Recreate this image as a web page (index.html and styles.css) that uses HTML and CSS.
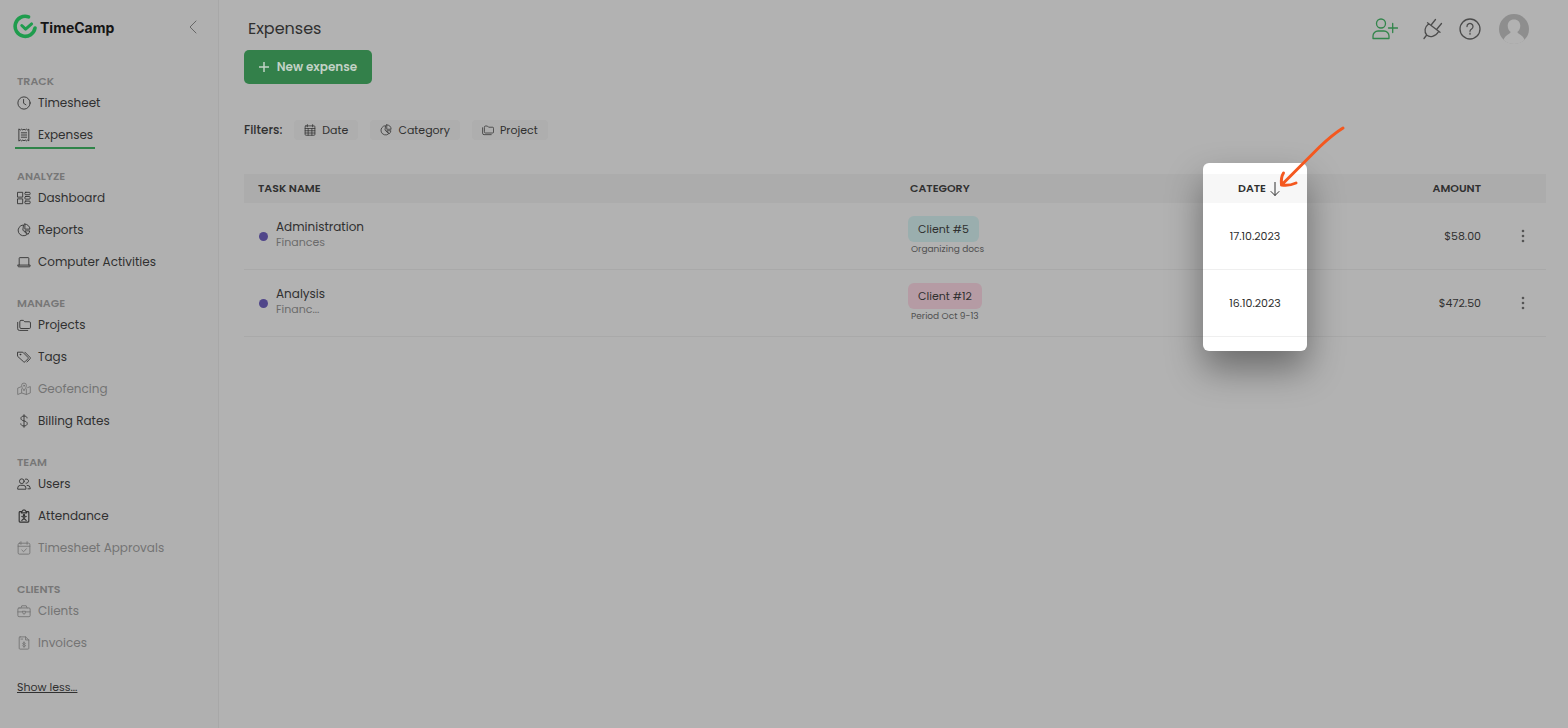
FILE: index.html
```html
<!DOCTYPE html>
<html lang="en">
<head>
  <meta charset="UTF-8" />
  <meta name="viewport" content="width=device-width, initial-scale=1.0"/>
  <title>TimeCamp - Expenses</title>
  <link rel="stylesheet" href="styles.css">
</head>
<body>

  <!-- shared icons -->
  <svg class="sprite" aria-hidden="true">
    <symbol id="i-pie" viewBox="0 0 16 16"><path d="M7 2.2A6.2 6.2 0 1 0 11.6 13L7 8.4zM9 1.2V7h5.8A6 6 0 0 0 9 1.2zM9.3 9h5.2a5.6 5.6 0 0 1-1.7 3.6z"/></symbol>
    <symbol id="i-folders" viewBox="0 0 16 16"><path d="M3.2 4a1.3 1.3 0 0 1 1.3-1.3h2.7l1.6 1.6h5.3a1.3 1.3 0 0 1 1.3 1.3v5.1a1.3 1.3 0 0 1-1.3 1.3H4.5a1.3 1.3 0 0 1-1.3-1.3zM.8 5v7.300a1.900 1.900 0 0 0 1.900 1.900h9.600"/></symbol>
    <symbol id="i-dots" viewBox="0 0 4 14"><g fill="currentColor" stroke="none"><circle cx="2" cy="2" r="1.300"/><circle cx="2" cy="7" r="1.300"/><circle cx="2" cy="12" r="1.300"/></g></symbol>
  </svg>

  <div class="app">
    <aside class="sidebar">
      <div class="brand">
        <a href="#" class="logo">
          <svg class="logo-mark" viewBox="0 0 24 26">
            <path d="M15.500 2.900A10 10 0 1 0 22 14" stroke-width="3.600"/>
            <path d="M8.800 11.500l3.800 3.600 6-5.200" stroke-width="3"/>
          </svg>
          <span>TimeCamp</span>
        </a>
        <button class="collapse" aria-label="Collapse menu">
          <svg viewBox="0 0 8 14"><path d="M7 1L1 7l6 6"/></svg>
        </button>
      </div>

      <nav>
        <section class="group">
          <h2>TRACK</h2>
          <a href="#"><svg viewBox="0 0 16 16"><circle cx="8" cy="8" r="7"/><path d="M7.500 4v4.300l2.700 1.800"/></svg>Timesheet</a>
          <a href="#" class="active"><svg viewBox="0 0 16 16"><path d="M2.500 1.300l1.400 1 1.400-1 1.400 1L8 1.300l1.400 1 1.400-1 1.400 1 1.300-1v13.400l-1.300-1-1.400 1-1.400-1-1.400 1-1.300-1-1.400 1-1.400-1-1.400 1zM5 5.500h6M5 8h6M5 10.500h6"/></svg>Expenses</a>
        </section>
        <section class="group">
          <h2>ANALYZE</h2>
          <a href="#"><svg viewBox="0 0 16 16"><rect x="1" y="1.500" width="5.500" height="5.500"/><rect x="1" y="9" width="5.500" height="5.500"/><rect x="9" y="1.500" width="6" height="2.800" rx="1"/><rect x="9" y="6.300" width="6" height="3" rx="1"/><rect x="9" y="11.500" width="6" height="3" rx="1"/></svg>Dashboard</a>
          <a href="#"><svg><use href="#i-pie"/></svg>Reports</a>
          <a href="#"><svg viewBox="0 0 16 16"><path d="M2.500 11.500V3.700a.7.7 0 0 1 .7-.7h9.600a.7.7 0 0 1 .7.7v7.800M1 11.500h14v1a1 1 0 0 1-1 1H2a1 1 0 0 1-1-1z"/></svg>Computer Activities</a>
        </section>
        <section class="group">
          <h2>MANAGE</h2>
          <a href="#"><svg><use href="#i-folders"/></svg>Projects</a>
          <a href="#"><svg viewBox="0 0 16 16"><path d="M1 2.500h5.600l6 6a1 1 0 0 1 0 1.400l-3.500 3.600a1 1 0 0 1-1.500 0L1 7.500zM9 2.500l6 6a1 1 0 0 1 0 1.400l-3.600 3.800"/><circle cx="3.800" cy="5.200" r=".5"/></svg>Tags</a>
          <a href="#" class="muted"><svg viewBox="0 0 16 16"><path d="M8 9.500S5.200 6.500 5.200 4a2.800 2.800 0 0 1 5.600 0C10.800 6.500 8 9.500 8 9.500zM4.500 5.500L.8 7v7.300l4.500-1.800 5.400 1.800 4.500-1.800V5.200l-3 1.200M5.300 8v4.500M10.700 8v6.300"/><circle cx="8" cy="4.200" r=".7"/></svg>Geofencing</a>
          <a href="#"><svg viewBox="0 0 16 16"><path d="M8 .8v14.400M11.500 4.500C11.500 3 10 2.300 8 2.300S4.500 3.300 4.500 5 6 7.400 8 7.900s3.700 1.200 3.700 3-1.700 2.800-3.700 2.800-3.700-.9-3.700-2.500"/></svg>Billing Rates</a>
        </section>
        <section class="group">
          <h2>TEAM</h2>
          <a href="#"><svg viewBox="0 0 16 16"><circle cx="5.500" cy="4.800" r="2.700"/><path d="M.8 13.500v-1A3.200 3.200 0 0 1 4 9.500h3a3.200 3.200 0 0 1 3.200 3v1zM9.500 2.500a2.500 2.500 0 1 1 .8 4.700M11.500 9.500a3.500 3.500 0 0 1 3.700 3.300v.7h-2.700"/></svg>Users</a>
          <a href="#"><svg class="strong" viewBox="0 0 16 16"><path d="M5 3H3.500a1 1 0 0 0-1 1v10a1 1 0 0 0 1 1h9a1 1 0 0 0 1-1V4a1 1 0 0 0-1-1H11M5 3.500l2-2.300h2l2 2.300v1H5zM8 9v1.800M5.500 13L8 10.800l2.500 2.200M5.500 8.500L8 9.500l2.500-1"/><circle cx="8" cy="7.200" r=".8"/></svg>Attendance</a>
          <a href="#" class="muted"><svg viewBox="0 0 16 16"><rect x="1.300" y="2.500" width="13.400" height="12.500" rx="1.500"/><path d="M1.300 6h13.400M4.500.8v3M11.500.8v3M5.500 10.300l2 2 3.300-3.500"/></svg>Timesheet Approvals</a>
        </section>
        <section class="group">
          <h2>CLIENTS</h2>
          <a href="#" class="muted"><svg viewBox="0 0 16 16"><rect x="1" y="4.500" width="14" height="10" rx="1.300"/><path d="M4.500 4.500L5.500 2h5l1 2.500M1 9h5.500M9.500 9H15M6.500 8.300h3V10a1.500 1.500 0 0 1-3 0z"/></svg>Clients</a>
          <a href="#" class="muted"><svg viewBox="0 0 16 16"><path d="M3.500 1h6.300L13.500 4.500V14a1 1 0 0 1-1 1h-9a1 1 0 0 1-1-1V2a1 1 0 0 1 1-1zM9.800 1v3.500h3.700M4.500 3.500h2M9.800 8.500C9.500 7.500 6.500 7.300 6.500 8.700s3.300.9 3.300 2.300-3 1.300-3.500.2M8 6.700v6.300"/></svg>Invoices</a>
        </section>
      </nav>
      <a href="#" class="show-less">Show less...</a>
    </aside>

    <main class="main">
      <header class="topbar">
        <h1>Expenses</h1>
        <div class="tools">
          <button class="invite" aria-label="Invite user"><svg viewBox="0 0 26 22"><circle cx="9" cy="5.500" r="4.500"/><path d="M1 20.500V18a5 5 0 0 1 5-5h6a5 5 0 0 1 5 5v2.500zM20.700 5.500v9M16.500 10h9"/></svg></button>
          <button class="plug" aria-label="Integrations"><svg viewBox="0 0 20 22"><path d="M4.500 4.800L17 14.300M5.700 5.700C1.500 9 1 14 3.700 17c3 2.800 8.500 2 12-3.500M3.700 17L1 20.500M8.500 6.500l4-5M14 11l4.500-5.500"/></svg></button>
          <button class="help" aria-label="Help"><svg viewBox="0 0 22 22"><circle cx="11" cy="11" r="10"/><path d="M8 8.500a3 3 0 1 1 4.600 2.500c-1.100.7-1.600 1.200-1.600 2.300M11 15.200v1"/></svg></button>
          <button class="avatar" aria-label="Account"><svg viewBox="0 0 30 30"><circle cx="15" cy="15" r="15" fill="#8e8e8e"/><path d="M15 5.500c-3.900 0-6.300 2.700-6.300 6.300 0 2.900 1.300 5.100 3 6.300-.3 1.500-3 2.200-5.200 4.400-1 1-1.700 2.300-2 3.200A15 15 0 0 0 15 30a15 15 0 0 0 10.500-4.300c-.3-.9-1-2.200-2-3.200-2.200-2.200-4.900-2.900-5.200-4.400 1.700-1.200 3-3.400 3-6.300 0-3.600-2.400-6.300-6.300-6.300z" fill="#b2b2b2"/></svg></button>
        </div>
      </header>

      <button class="new-expense">
        <svg viewBox="0 0 10 10"><path d="M5 0v10M0 5h10"/></svg>
        New expense
      </button>

      <div class="filters">
        <span class="filters-label">Filters:</span>
        <button class="filter"><svg viewBox="0 0 16 16"><rect x="1.500" y="2.500" width="13" height="12.500" rx="1"/><path d="M1.500 6h13M1.500 9h13M1.500 12h13M5.500 6v9M10.500 6v9M4.500.8v3M11.500.8v3"/></svg>Date</button>
        <button class="filter"><svg><use href="#i-pie"/></svg>Category</button>
        <button class="filter"><svg><use href="#i-folders"/></svg>Project</button>
      </div>

      <div class="table-wrap">
        <div class="spotlight"></div>
        <table>
          <thead>
            <tr>
              <th class="task">TASK NAME</th>
              <th class="category">CATEGORY</th>
              <th class="date"><button class="sort">DATE <svg viewBox="0 0 10 14"><path d="M5 0v13.300M1 9.500l4 4 4-4"/></svg></button></th>
              <th class="amount">AMOUNT</th>
              <th class="actions"></th>
            </tr>
          </thead>
          <tbody>
            <tr>
              <td class="task">
                <div class="task-cell">
                  <span class="dot"></span>
                  <div class="task-text">
                    <div class="task-name">Administration</div>
                    <div class="task-parent">Finances</div>
                  </div>
                </div>
              </td>
              <td class="category"><span class="tag teal">Client #5</span><div class="note">Organizing docs</div></td>
              <td class="date">17.10.2023</td>
              <td class="amount">$58.00</td>
              <td class="actions"><button aria-label="More"><svg><use href="#i-dots"/></svg></button></td>
            </tr>
            <tr>
              <td class="task">
                <div class="task-cell">
                  <span class="dot"></span>
                  <div class="task-text">
                    <div class="task-name">Analysis</div>
                    <div class="task-parent">Financ...</div>
                  </div>
                </div>
              </td>
              <td class="category"><span class="tag pink">Client #12</span><div class="note">Period Oct 9-13</div></td>
              <td class="date">16.10.2023</td>
              <td class="amount">$472.50</td>
              <td class="actions"><button aria-label="More"><svg><use href="#i-dots"/></svg></button></td>
            </tr>
          </tbody>
        </table>
        <svg class="pointer" viewBox="0 0 68 64"><path d="M65 3C57 8 50 14 42 21.500L4 59.500M5.500 48C3.500 51 3 55 3.500 60M3.500 60c5 .8 9.500.3 14.500-2"/></svg>
      </div>
    </main>
  </div>

</body>
</html>
```
FILE: styles.css
```css
* {
  box-sizing: border-box;
}

body {
  margin: 0;
  background: #b2b2b2;
  color: #303030;
  font-family: Poppins, Inter, sans-serif;
  font-size: 12px;
}

svg {
  fill: none;
  stroke: currentColor;
  stroke-width: 1;
  stroke-linecap: round;
  stroke-linejoin: round;
  flex-shrink: 0;
}

button {
  padding: 0;
  border: none;
  background: none;
  color: inherit;
  font: inherit;
  cursor: pointer;
}

a {
  color: inherit;
  text-decoration: none;
}

h1,
h2 {
  margin: 0;
}

.sprite {
  display: none;
}

.app {
  display: flex;
  min-height: 100vh;
}

/* sidebar */
.sidebar {
  width: 219px;
  flex-shrink: 0;
  padding: 14px 17px 0;
  background: #b0b0b0;
  border-right: 1px solid #a8a8a8;
}

.brand {
  display: flex;
  align-items: center;
  justify-content: space-between;
  height: 26px;
  margin: 0 4px 35px -4px;
}

.logo {
  display: flex;
  align-items: center;
  gap: 3px;
  color: #151515;
  font-family: Inter, sans-serif;
  font-size: 14px;
  font-weight: 700;
}

.logo-mark {
  width: 24px;
  height: 26px;
  color: #1f9c4d;
}

.collapse {
  color: #666;
}

.collapse svg {
  display: block;
  width: 8px;
  height: 14px;
}

.group {
  display: flex;
  flex-direction: column;
  align-items: flex-start;
  margin-bottom: 19px;
}

.group h2 {
  color: #777;
  font-size: 11px;
  font-weight: 600;
  line-height: 12px;
}

.group a {
  display: flex;
  align-items: center;
  gap: 7px;
  height: 32px;
}

.group a svg {
  width: 14px;
  height: 14px;
}

.group a.active {
  height: 30px;
  margin: 0 -2px 2px;
  padding: 2px 2px 0;
  box-shadow: inset 0 -2px #2f8449;
}

.group a.muted {
  color: #747474;
}

.group .strong {
  stroke-width: 1.3;
}

.show-less {
  display: inline-block;
  font-size: 11px;
  line-height: 16px;
  text-decoration: underline;
}

/* main */
.main {
  flex: 1;
  min-width: 0;
  padding: 14px 22px 0 25px;
}

.topbar {
  display: flex;
  align-items: center;
  justify-content: space-between;
  height: 29px;
  margin-bottom: 7px;
  padding: 0 17px 0 4px;
}

.topbar h1 {
  font-size: 16px;
  font-weight: 400;
}

.tools {
  display: flex;
  align-items: center;
  color: #4c4c4c;
}

.tools svg {
  display: block;
  stroke-width: 1.3;
}

.invite {
  margin-right: 25px;
  color: #32854b;
}

.invite svg {
  width: 26px;
  height: 22px;
}

.plug svg {
  width: 20px;
  height: 22px;
}

.help {
  margin: 0 18px 0 16px;
}

.help svg {
  width: 22px;
  height: 22px;
}

.avatar svg {
  width: 30px;
  height: 30px;
  stroke: none;
}

.new-expense {
  display: flex;
  align-items: center;
  justify-content: center;
  gap: 8px;
  width: 128px;
  height: 34px;
  border-radius: 5px;
  background: #33804a;
  color: #c2d2c6;
  font-weight: 600;
}

.new-expense svg {
  width: 10px;
  height: 10px;
  stroke-width: 1.5;
}

.filters {
  display: flex;
  align-items: center;
  gap: 12px;
  margin: 36px 0 34px;
}

.filters-label {
  font-weight: 500;
}

.filter {
  display: flex;
  align-items: center;
  gap: 6px;
  height: 20px;
  padding: 0 10px;
  border-radius: 4px;
  background: #aeaeae;
  font-size: 11px;
}

.filter svg {
  width: 12px;
  height: 12px;
}

/* expenses table */
.table-wrap {
  position: relative;
}

table {
  width: 100%;
  table-layout: fixed;
  border-spacing: 0;
  font-size: 11px;
}

th {
  height: 29px;
  padding: 0 14px;
  background: #acacac;
  text-align: left;
  font-weight: 600;
}

td {
  height: 67px;
  padding: 0 14px;
  border-bottom: 1px solid #a9a9a9;
}

th.task {
  width: 50%;
}

th.date {
  width: 104px;
}

th.amount {
  width: 193px;
}

th.actions {
  width: 46px;
}

.amount {
  padding-right: 19px;
  text-align: right;
}

td.actions {
  padding: 0 21px;
  color: #555;
}

.actions button,
.actions svg {
  display: block;
  width: 4px;
  height: 14px;
}

.task-cell {
  display: flex;
  align-items: center;
  gap: 8px;
}

.dot {
  width: 9px;
  height: 9px;
  margin-left: 1px;
  border-radius: 50%;
  background: #50468a;
}

.task-text {
  padding-bottom: 4px;
}

.task-name {
  font-size: 12px;
  line-height: 16px;
}

.task-parent {
  color: #6b6b6b;
  line-height: 14px;
}

th.category {
  padding-left: 15px;
}

td.category {
  padding: 0 13px 1px;
}

.tag {
  display: block;
  width: fit-content;
  padding: 0 10px;
  border-radius: 6px;
  line-height: 26px;
}

.teal {
  background: #9aaeae;
}

.pink {
  background: #b59ba4;
}

.note {
  padding-left: 3px;
  color: #505050;
  font-size: 9px;
  line-height: 14px;
}

/* highlighted date column */
.spotlight {
  position: absolute;
  top: -11px;
  bottom: -14px;
  right: 239px;
  width: 104px;
  border-radius: 6px;
  background: #fff;
  box-shadow: 0 18px 36px rgba(0, 0, 0, 0.4);
}

.date {
  position: relative;
  z-index: 1;
  padding: 0;
  background: #fff;
  text-align: center;
}

th.date {
  background: #f7f7f7;
}

td.date {
  border-color: #efefef;
}

.sort {
  display: flex;
  align-items: center;
  gap: 4px;
  margin-left: 35px;
  font-weight: 600;
}

.sort svg {
  width: 10px;
  height: 14px;
}

.pointer {
  position: absolute;
  z-index: 2;
  top: -49px;
  right: 200px;
  width: 68px;
  height: 64px;
  color: #f4581f;
  stroke-width: 3;
}
```
